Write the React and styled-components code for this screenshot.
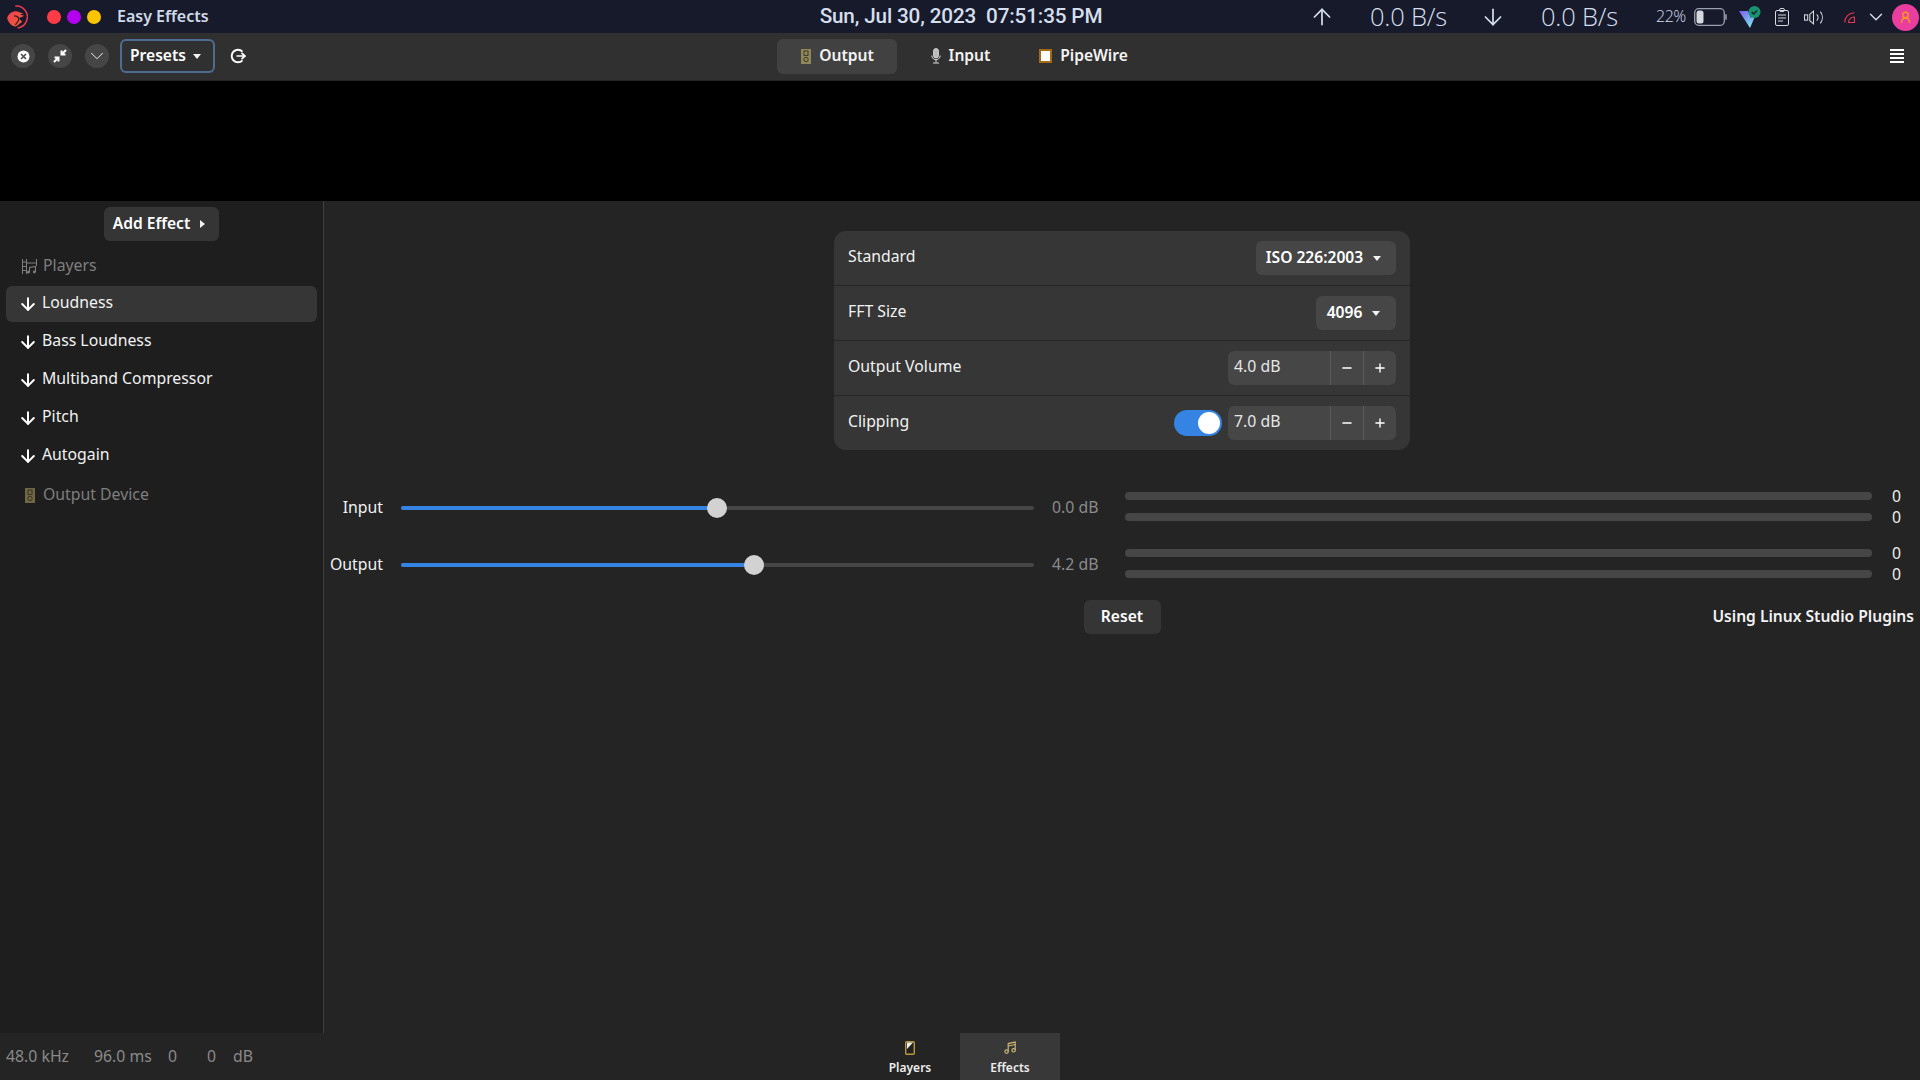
import React from "react";
import styled, { createGlobalStyle } from "styled-components";
import { ArrowUp, ArrowDown, ChevronDown, Minus, Plus } from "lucide-react";

const Global = createGlobalStyle`
  html, body { margin: 0; padding: 0; background: #242424; overflow: hidden; }
  #root { width: 1920px; height: 1080px; }
  * { box-sizing: border-box; }
`;

const FONT = `"Noto Sans", "Open Sans", sans-serif`;

const Shell = styled.div`
  width: 1920px; height: 1080px; display: flex; flex-direction: column;
  font-family: ${FONT}; font-size: 15.8px; color: #f2f2f2; background: #242424;
`;

/* system panel */
const TopPanel = styled.header`
  height: 33px; flex: none; background: #161a2b; color: #d5deec;
  display: grid; grid-template-columns: 1fr auto 1fr; align-items: center;
`;
const PanelLeft = styled.div`display: flex; align-items: center; padding-left: 6px;`;
const Dot = styled.span`
  width: 14px; height: 14px; border-radius: 50%; background: ${p => p.$c}; margin-left: ${p => p.$ml}px; flex: none;
`;
const AppName = styled.span`
  margin-left: 16px; font-weight: 600; font-size: 16px; color: #d0d9e8; transform: translateY(-1px);
`;
const Clock = styled.div`
  font-family: Roboto, sans-serif; font-weight: 500; font-size: 20.7px; letter-spacing: -0.15px; white-space: pre; color: #d5deec; transform: translate(1px, -1px);
`;
const PanelRight = styled.div`display: flex; align-items: center; justify-content: flex-end; padding-right: 1px;`;
const TraySlot = styled.span`
  display: inline-flex; align-items: center; margin-left: ${p => p.$ml || 0}px; flex: none;
`;
const Speed = styled.span`
  font-family: "Open Sans", sans-serif; font-weight: 300; font-size: 25.5px; width: 77px; white-space: nowrap; color: #d5deec; letter-spacing: -0.2px; margin-left: 35px; transform: translateY(-1px);
`;
const Percent = styled.span`
  font-family: "Open Sans", sans-serif; font-weight: 300; font-size: 16px; width: 29px; white-space: nowrap; margin-left: 38px; color: #d5deec; letter-spacing: -0.5px; transform: translateY(-1.5px);
`;
const Avatar = styled.span`
  width: 27px; height: 27px; border-radius: 50%; background: #e93e9d; display: inline-flex; align-items: center; justify-content: center; margin-left: 5px; flex: none;
`;

/* header bar */
const HeaderBar = styled.div`
  height: 48px; flex: none; background: #303030; border-bottom: 1px solid #242424; padding-bottom: 1px;
  display: grid; grid-template-columns: 1fr auto 1fr; align-items: center;
`;
const HeaderLeft = styled.div`display: flex; align-items: center; padding-left: 11px;`;
const RoundButton = styled.button`
  width: 24px; height: 24px; border-radius: 50%; border: 0; padding: 0; background: #464646; color: #fff;
  display: inline-flex; align-items: center; justify-content: center; margin-right: 13px; flex: none;
`;
const ButtonText = styled.span`transform: translateY(-1px); white-space: nowrap;`;
const PresetsButton = styled.button`
  width: 95px; height: 34px; margin-left: -2px; background: #303030; border: 2px solid #4e6c92; border-radius: 6px; color: #fff;
  font: 600 15.6px ${FONT}; display: inline-flex; align-items: center; justify-content: center; gap: 7px; padding: 0 4px 0 0;
`;
const Caret = styled.span`
  width: 0; height: 0; border-left: 4.5px solid transparent; border-right: 4.5px solid transparent; border-top: 5px solid #f2f2f2; display: inline-block; flex: none;
`;
const RightCaret = styled.span`
  width: 0; height: 0; border-top: 4.5px solid transparent; border-bottom: 4.5px solid transparent; border-left: 5px solid #f2f2f2; display: inline-block; flex: none;
`;
const Tabs = styled.nav`display: flex; gap: 3px;`;
const Tab = styled.button`
  width: 120px; height: 35px; border: 0; border-radius: 6px; padding: 0 0 0 1px; color: #f4f4f4;
  background: ${p => (p.$active ? "#414141" : "transparent")};
  font: 600 15.6px ${FONT}; display: inline-flex; align-items: center; justify-content: center; gap: 8px;
`;
const HeaderRight = styled.div`display: flex; justify-content: flex-end; padding-right: 16px; align-items: center;`;

const BlackBand = styled.div`height: 120px; flex: none; background: #000;`;

/* body */
const Body = styled.div`flex: 1; display: flex; min-height: 0;`;
const Sidebar = styled.aside`
  width: 324px; flex: none; background: #1e1e1e; border-right: 1px solid #3f3f3f; padding: 6px 6px 0; display: flex; flex-direction: column; align-items: stretch;
`;
const PlainButton = styled.button`
  height: 34px; border: 0; border-radius: 6px; background: #353535; color: #fff; font: 600 15.6px ${FONT};
  display: inline-flex; align-items: center; justify-content: center;
  padding: 0 ${p => p.$pr || 0}px 0 0;
  width: ${p => p.$w}px; gap: ${p => p.$gap || 0}px; align-self: ${p => p.$self || "auto"};
`;
const EffectList = styled.ul`list-style: none; margin: 7px 0 0; padding: 0; display: flex; flex-direction: column; gap: 2px;`;
const EffectRow = styled.li`
  height: 36px; border-radius: 6px; padding-left: 16px; display: flex; align-items: center;
  background: ${p => (p.$active ? "#363636" : "transparent")};
  color: ${p => (p.$dim ? "#7e7e7e" : "#f2f2f2")};
  margin-top: ${p => p.$mt || 0}px; line-height: 1;
`;
const RowLabel = styled.span`transform: translateY(${p => (p.$dim ? 0 : -1)}px);`;
const IconBox = styled.span`
  width: ${p => p.$w}px; margin-right: ${p => p.$mr}px; display: inline-flex; justify-content: center; flex: none;
  & > svg { flex: none; }
`;

const Main = styled.main`flex: 1; min-width: 0; display: flex; flex-direction: column; align-items: center; padding-top: 30px;`;
const Card = styled.section`
  width: 576px; background: #363636; border-radius: 12px; overflow: hidden; flex: none;
`;
const CardRow = styled.div`
  height: ${p => (p.$last ? 54 : 55)}px; padding: 0 14px; display: flex; align-items: center; justify-content: space-between;
  border-bottom: ${p => (p.$last ? "0" : "1px solid #252525")};
`;
const CardLabel = styled.span`transform: translateY(-2px);`;
const CardControls = styled.div`display: flex; align-items: center; gap: 6px;`;
const Dropdown = styled.button`
  width: ${p => p.$w}px; height: 34px; border: 0; border-radius: 6px; background: #464646; color: #fff; font: 600 15.6px ${FONT};
  display: inline-flex; align-items: center; justify-content: center; gap: 10px; padding: 0 5px 0 0;
`;
const Spin = styled.div`
  width: 168px; height: 34px; border-radius: 6px; background: #464646; display: flex; overflow: hidden;
`;
const SpinEntry = styled.span`flex: 1; padding-left: 6px; display: flex; align-items: center; color: #e6e6e6; transform: translateY(-2px);`;
const SpinButton = styled.span`
  width: 33px; border-left: 1px solid #5a5a5a; display: flex; align-items: center; justify-content: center; color: #fff;
`;
const Switch = styled.span`
  width: 48px; height: 26px; border-radius: 13px; background: #3584e4; position: relative; display: inline-block; flex: none;
`;
const SwitchKnob = styled.span`
  position: absolute; right: 2px; top: 2px; width: 22px; height: 22px; border-radius: 50%; background: #fff;
`;

const Levels = styled.div`
  align-self: stretch; margin-top: 41px; padding-left: 6px;
  display: grid; grid-template-columns: 53px 633px 55px 747px auto; column-gap: 18px; row-gap: 23px; justify-content: start;
`;
const LevelLabel = styled.span`height: 34px; line-height: 33px; text-align: right; white-space: nowrap;`;
const SliderTrack = styled.div`
  align-self: center; height: 4px; border-radius: 2px; background: #464646; position: relative;
`;
const SliderFill = styled.div`height: 100%; border-radius: 2px; background: #3584e4;`;
const SliderThumb = styled.div`
  position: absolute; top: -8px; width: 20px; height: 20px; margin-left: -10px; border-radius: 50%; background: #d2d2d2;
`;
const LevelValue = styled.span`height: 34px; line-height: 33px; color: #8b8b8b; white-space: nowrap;`;
const MeterStack = styled.div`
  grid-column: 4 / 6; margin-top: 1px; display: grid; grid-template-columns: 747px auto; column-gap: 20px; row-gap: 13px; grid-auto-rows: 8px; align-items: center;
`;
const MeterBar = styled.div`height: 8px; border-radius: 4px; background: #464646;`;
const MeterValue = styled.span`line-height: 8px; height: 8px; color: #eee;`;

const Footer = styled.div`
  align-self: stretch; margin-top: 18px; display: grid; grid-template-columns: 1fr auto 1fr; align-items: center;
`;
const PluginNote = styled.span`justify-self: end; margin-right: 6px; font-weight: 600; font-size: 15.6px; transform: translateY(-1px); white-space: nowrap; grid-column: 3;`;

/* bottom bar */
const BottomBar = styled.footer`
  height: 47px; flex: none; background: #242424; display: grid; grid-template-columns: 1fr auto 1fr; align-items: center;
`;
const Stats = styled.div`display: flex; padding-left: 6px; color: #8a8a8a; transform: translateY(-1px);`;
const Stat = styled.span`width: ${p => p.$w}px; white-space: nowrap; flex: none;`;
const Switcher = styled.div`display: flex; align-self: stretch;`;
const SwitcherItem = styled.div`
  width: 100px; background: ${p => (p.$active ? "#383838" : "transparent")}; display: flex; flex-direction: column; align-items: center; justify-content: flex-start; padding-top: 8px; gap: ${p => p.$gap}px;
  font-weight: 600; font-size: 12px; line-height: 16px; color: #eee;
`;

const Logo = () => (
  <svg width="22" height="26" viewBox="0 2 19 22" fill="none">
    <defs>
      <linearGradient id="lg" x1="0" y1="0" x2="1" y2="1"><stop offset="0" stopColor="#f2405a"/><stop offset="1" stopColor="#e8602a"/></linearGradient>
    </defs>
    <path d="M8 3.500a9.500 9.500 0 0 1 9.500 13.500A9.500 9.500 0 0 1 10 22.500" stroke="#e93a52" strokeWidth="1.300"/>
    <path d="M1 14c1-4 4-6 8-6l6 2-3 1 4 1-5 2 3 3-5 4c-3 1-7-3-8-7Z" fill="url(#lg)"/>
    <path d="M7 12c2 0 4 1 4 3s-2 3-3 5" stroke="#3a1a20" strokeWidth="1"/>
  </svg>
);
const XCircle = () => (
  <svg width="13" height="13" viewBox="0 0 13 13">
    <circle cx="6.500" cy="6.500" r="6" fill="#fff"/>
    <path d="M4 4l5 5M9 4l-5 5" stroke="#464646" strokeWidth="1.500"/>
  </svg>
);
const Collapse = () => (
  <svg width="14" height="14" viewBox="0 0 14 14" fill="none" stroke="#fff" strokeWidth="2">
    <path d="M13 1L8.500 5.500M8.500 1.500v4h4"/>
    <path d="M1 13l4.500-4.500M5.500 12.500v-4h-4"/>
  </svg>
);
const Restart = () => (
  <svg width="16" height="16" viewBox="0 0 16 16" fill="none" stroke="#fff" strokeWidth="1.900">
    <path d="M12.500 3.600A6.300 6.300 0 1 0 12.500 12.400"/>
    <path d="M6.500 8H15M11.500 4.800L15 8l-3.500 3.200" strokeWidth="1.700"/>
  </svg>
);
const Hamburger = () => (
  <svg width="14" height="14" viewBox="0 0 14 14" fill="#fff">
    <rect y="0" width="14" height="2"/>
    <rect y="4" width="14" height="2"/>
    <rect y="8" width="14" height="2"/>
    <rect y="12" width="14" height="2"/>
  </svg>
);
const SpeakerBox = ({ size = 15, c = "#8f8659" }) => (
  <svg width={Math.round(size * 0.68)} height={size} viewBox="0 0 10 15">
    <rect width="10" height="15" fill={c}/>
    <rect x="3" y="2" width="4" height="4.500" fill="none" stroke="#2c2a20" strokeWidth="0.800"/>
    <circle cx="5" cy="10.500" r="2.200" fill="none" stroke="#2c2a20" strokeWidth="0.800"/>
  </svg>
);
const Mic = () => (
  <svg width="10" height="16" viewBox="0 0 10 16" fill="none">
    <rect x="2.500" y="0.500" width="5" height="9.500" rx="2.500" fill="#bbb" stroke="#eee" strokeWidth="0.700"/>
    <path d="M0.800 7.500a4.200 4.200 0 0 0 8.400 0M5 12v2.500M2 15h6" stroke="#ddd" strokeWidth="1"/>
  </svg>
);
const PipeSquare = () => (
  <svg width="13" height="14" viewBox="0 0 13 14">
    <rect x="1" y="1" width="11" height="12" fill="#fff" stroke="#a06c18" strokeWidth="2"/>
  </svg>
);
const PlayersGlyph = () => (
  <svg width="15" height="15" viewBox="0 0 15 15" fill="none" stroke="#7e7e7e" strokeWidth="1">
    <path d="M.5 0v15M4.500 0v15M14.500 0v7M.5 3h4M.5 7.500h4M.5 11.500h4M4.500 4h10"/>
    <path d="M7.500 13V8.500l6-1V13" strokeWidth="1.100"/>
    <circle cx="6.300" cy="13.200" r="1.400" fill="#7e7e7e" stroke="none"/>
    <circle cx="12.300" cy="13" r="1.400" fill="#7e7e7e" stroke="none"/>
  </svg>
);
const PhoneGlyph = () => (
  <svg width="10" height="14" viewBox="0 0 10 14">
    <rect x="0.700" y="0.700" width="8.600" height="12.600" rx="1" fill="#222" stroke="#b69a3a" strokeWidth="1.400"/>
    <path d="M2 11.500V8L8 1.500H2Z" fill="#eee"/>
  </svg>
);
const NotesGlyph = () => (
  <svg width="13" height="13" viewBox="0 0 13 13" fill="none" stroke="#c9b370" strokeWidth="1.200">
    <path d="M4.200 10.500V2.600l7-1.500V9"/>
    <path d="M4.200 5l7-1.500"/>
    <circle cx="2.600" cy="10.600" r="1.700"/>
    <circle cx="9.600" cy="9.300" r="1.700"/>
  </svg>
);
const Battery = () => (
  <svg width="33" height="18" viewBox="0 0 33 18" fill="none">
    <rect x="0.700" y="0.700" width="29.600" height="16.600" rx="4" stroke="#9aa0ad" strokeWidth="1.300"/>
    <rect x="2.500" y="2.500" width="7" height="13" rx="2.500" fill="#d5d8de"/>
    <rect x="31" y="6" width="2" height="6" rx="1" fill="#7c808c"/>
  </svg>
);
const VeeIcon = () => (
  <svg width="22" height="22" viewBox="0 0 22 22">
    <defs>
      <linearGradient id="vg" x1="0" y1="0" x2="0.700" y2="1"><stop offset="0" stopColor="#7a5cf0"/><stop offset="1" stopColor="#7fe8f0"/></linearGradient>
    </defs>
    <path d="M0 5h9l3 7 3-5 2 1-6 14Z" fill="url(#vg)"/>
    <circle cx="15.500" cy="6" r="6" fill="#17936f"/>
    <path d="M12.700 6l2 2 3.400-3.600" fill="none" stroke="#152028" strokeWidth="1.500"/>
  </svg>
);
const Clipboard = () => (
  <svg width="14" height="18" viewBox="0 0 14 18" fill="none" stroke="#d5d8de" strokeWidth="1">
    <rect x="0.500" y="2.500" width="13" height="15" rx="1.500"/>
    <rect x="4.500" y="0.500" width="5" height="3" rx="1.500"/>
    <path d="M3 7h8M3 10h8M3 13h5"/>
  </svg>
);
const Volume = () => (
  <svg width="19" height="15" viewBox="0 0 18 14" fill="none" stroke="#d5d8de" strokeWidth="1">
    <rect x="0.500" y="4.500" width="3" height="5"/>
    <path d="M5.500 4l3.500-3v12L5.500 10Z"/>
    <path d="M12 4a4 4 0 0 1 0 6M15.500 1.500a9 9 0 0 1 0 11"/>
  </svg>
);
const RedSignal = () => (
  <svg width="11" height="11" viewBox="0 0 11 11" fill="none" stroke="#e8384f" strokeWidth="1.100">
    <path d="M.7 10.500C.7 5 5 .8 10.400.700"/>
    <path d="M4.500 10.500c0-3 2.500-5.500 5.900-5.500v5.500Z"/>
  </svg>
);
const Person = () => (
  <svg width="11" height="13" viewBox="0 0 11 13" fill="none" stroke="#f79a20" strokeWidth="1.400">
    <circle cx="5.500" cy="4" r="2.800"/>
    <path d="M1.500 12c0-3 1.500-5 4-5s4 2 4 5"/>
  </svg>
);

const effects = ["Loudness", "Bass Loudness", "Multiband Compressor", "Pitch", "Autogain"];

const levelRows = [
  { label: "Input", value: "0.0 dB", pct: 49.9 },
  { label: "Output", value: "4.2 dB", pct: 55.8 },
];

const SpinBox = ({ value }) => (
  <Spin>
    <SpinEntry>{value}</SpinEntry>
    <SpinButton><Minus size={14} strokeWidth={2.4} /></SpinButton>
    <SpinButton><Plus size={14} strokeWidth={2.4} /></SpinButton>
  </Spin>
);

export default function App() {
  return (
    <Shell>
      <Global />
      <TopPanel>
        <PanelLeft>
          <Logo />
          <Dot $c="#ff3b46" $ml={19} />
          <Dot $c="#b400f0" $ml={6} />
          <Dot $c="#ffc400" $ml={6} />
          <AppName>Easy Effects</AppName>
        </PanelLeft>
        <Clock>{"Sun, Jul 30, 2023  07:51:35 PM"}</Clock>
        <PanelRight>
          <TraySlot><ArrowUp size={26} strokeWidth={1.6} color="#d5deec" /></TraySlot>
          <Speed>0.0 B/s</Speed>
          <TraySlot $ml={33}><ArrowDown size={26} strokeWidth={1.6} color="#d5deec" /></TraySlot>
          <Speed>0.0 B/s</Speed>
          <Percent>22%</Percent>
          <TraySlot $ml={9}><Battery /></TraySlot>
          <TraySlot $ml={12}><VeeIcon /></TraySlot>
          <TraySlot $ml={14}><Clipboard /></TraySlot>
          <TraySlot $ml={15}><Volume /></TraySlot>
          <TraySlot $ml={21}><RedSignal /></TraySlot>
          <TraySlot $ml={10}><ChevronDown size={22} strokeWidth={1.5} color="#d5deec" /></TraySlot>
          <Avatar><Person /></Avatar>
        </PanelRight>
      </TopPanel>

      <HeaderBar>
        <HeaderLeft>
          <RoundButton><XCircle /></RoundButton>
          <RoundButton><Collapse /></RoundButton>
          <RoundButton><ChevronDown size={22} strokeWidth={1} /></RoundButton>
          <PresetsButton><ButtonText>Presets</ButtonText><Caret /></PresetsButton>
          <TraySlot $ml={15}><Restart /></TraySlot>
        </HeaderLeft>
        <Tabs>
          <Tab $active><SpeakerBox /><ButtonText>Output</ButtonText></Tab>
          <Tab><Mic /><ButtonText>Input</ButtonText></Tab>
          <Tab><PipeSquare /><ButtonText>PipeWire</ButtonText></Tab>
        </Tabs>
        <HeaderRight><Hamburger /></HeaderRight>
      </HeaderBar>

      <BlackBand />

      <Body>
        <Sidebar>
          <PlainButton $w={115} $gap={10} $pr={5} $self="center"><ButtonText>Add Effect</ButtonText><RightCaret /></PlainButton>
          <EffectList>
            <EffectRow $dim><IconBox $w={15} $mr={6}><PlayersGlyph /></IconBox><RowLabel $dim>Players</RowLabel></EffectRow>
            {effects.map((name, i) => (
              <EffectRow key={name} $active={i === 0}>
                <IconBox $w={12} $mr={8}><ArrowDown size={20} strokeWidth={2.4} color="#fff" /></IconBox>
                <RowLabel>{name}</RowLabel>
              </EffectRow>
            ))}
            <EffectRow $dim $mt={1}><IconBox $w={15} $mr={6}><SpeakerBox size={15} c="#6f6843" /></IconBox><RowLabel $dim>Output Device</RowLabel></EffectRow>
          </EffectList>
        </Sidebar>
        <Main>
          <Card>
            <CardRow>
              <CardLabel>Standard</CardLabel>
              <Dropdown $w={140}><ButtonText>ISO 226:2003</ButtonText><Caret /></Dropdown>
            </CardRow>
            <CardRow>
              <CardLabel>FFT Size</CardLabel>
              <Dropdown $w={80}><ButtonText>4096</ButtonText><Caret /></Dropdown>
            </CardRow>
            <CardRow>
              <CardLabel>Output Volume</CardLabel>
              <SpinBox value="4.0 dB" />
            </CardRow>
            <CardRow $last>
              <CardLabel>Clipping</CardLabel>
              <CardControls>
                <Switch><SwitchKnob /></Switch>
                <SpinBox value="7.0 dB" />
              </CardControls>
            </CardRow>
          </Card>

          <Levels>
            {levelRows.map(r => (
              <React.Fragment key={r.label}>
                <LevelLabel>{r.label}</LevelLabel>
                <SliderTrack>
                  <SliderFill style={{ width: `${r.pct}%` }} />
                  <SliderThumb style={{ left: `${r.pct}%` }} />
                </SliderTrack>
                <LevelValue>{r.value}</LevelValue>
                <MeterStack>
                  <MeterBar /><MeterValue>0</MeterValue>
                  <MeterBar /><MeterValue>0</MeterValue>
                </MeterStack>
              </React.Fragment>
            ))}
          </Levels>

          <Footer>
            <span />
            <PlainButton $w={77}><ButtonText>Reset</ButtonText></PlainButton>
            <PluginNote>Using Linux Studio Plugins</PluginNote>
          </Footer>
        </Main>
      </Body>

      <BottomBar>
        <Stats>
          <Stat $w={88}>48.0 kHz</Stat>
          <Stat $w={74}>96.0 ms</Stat>
          <Stat $w={39}>0</Stat>
          <Stat $w={26}>0</Stat>
          <Stat $w={20}>dB</Stat>
        </Stats>
        <Switcher>
          <SwitcherItem $gap={5}><PhoneGlyph />Players</SwitcherItem>
          <SwitcherItem $active $gap={6}><NotesGlyph />Effects</SwitcherItem>
        </Switcher>
        <span />
      </BottomBar>
    </Shell>
  );
}
